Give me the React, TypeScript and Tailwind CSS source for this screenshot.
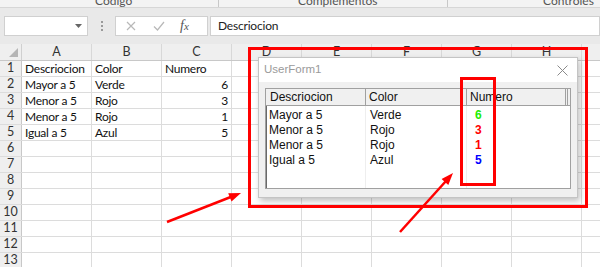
import React from "react";

const cols = ["A", "B", "C", "D", "E", "F", "G", "H", "I"];
const data: [string, string, string][] = [
  ["Descriocion", "Color", "Numero"],
  ["Mayor a 5", "Verde", "6"],
  ["Menor a 5", "Rojo", "3"],
  ["Menor a 5", "Rojo", "1"],
  ["Igual a 5", "Azul", "5"],
];
const listRows: [string, string, string, string][] = [
  ["Mayor a 5", "Verde", "6", "text-[#22ee00]"],
  ["Menor a 5", "Rojo", "3", "text-[#ff0000]"],
  ["Menor a 5", "Rojo", "1", "text-[#ff0000]"],
  ["Igual a 5", "Azul", "5", "text-[#0000ff]"],
];

const sheetFont = { fontFamily: "Lato, 'Liberation Sans', sans-serif" };
const formFont = { fontFamily: "'Liberation Sans', Arial, sans-serif" };

export default function App() {
  const rows = Array.from({ length: 13 }, (_, i) => i + 1);
  return (
    <div className="relative w-[600px] h-[267px] overflow-hidden bg-white" style={sheetFont}>
      {/* ribbon group labels */}
      <div className="relative h-[8px] bg-[#f3f3f3] border-b border-[#d6d6d6] overflow-hidden">
        <div className="absolute left-[95px] top-[-8px] text-[12px] text-[#555]">Código</div>
        <div className="absolute left-[218px] top-0 h-[7px] w-px bg-[#c8c8c8]" />
        <div className="absolute left-[298px] top-[-8px] text-[12px] text-[#555]">Complementos</div>
        <div className="absolute left-[447px] top-0 h-[7px] w-px bg-[#c8c8c8]" />
        <div className="absolute left-[543px] top-[-8px] text-[12px] text-[#555]">Controles</div>
      </div>
      {/* formula bar */}
      <div className="h-[36px] bg-[#e9e9e9] flex items-start pt-[8px]">
        <div className="ml-[4px] w-[84px] h-[20px] bg-white border border-[#d0d0d0] flex items-center justify-end pr-[5px]">
          <svg width="7" height="4" viewBox="0 0 7 4"><path d="M0 0h7L3.5 4z" fill="#666" /></svg>
        </div>
        <div className="w-[27px] h-[20px] flex flex-col items-center justify-center gap-[2px]">
          <div className="w-[2px] h-[2px] bg-[#9a9a9a]" />
          <div className="w-[2px] h-[2px] bg-[#9a9a9a]" />
          <div className="w-[2px] h-[2px] bg-[#9a9a9a]" />
        </div>
        <div className="w-[93px] h-[20px] bg-white border border-[#d0d0d0] flex items-center">
          <svg className="ml-[10px]" width="10" height="10" viewBox="0 0 10 10">
            <path d="M1 1L9 9M9 1L1 9" stroke="#b8b8b8" strokeWidth="1.2" />
          </svg>
          <svg className="ml-[17px]" width="12" height="10" viewBox="0 0 12 10">
            <path d="M1 5.5L4.5 9L11 1" stroke="#b8b8b8" strokeWidth="1.2" fill="none" />
          </svg>
          <span
            className="ml-[15px] text-[14px] italic text-[#555] leading-none"
            style={{ fontFamily: "'Liberation Serif', serif" }}
          >
            f<span className="text-[11px]">x</span>
          </span>
        </div>
        <div className="ml-[2px] flex-1 h-[20px] bg-white border border-[#d0d0d0] flex items-center pl-[7px] text-[12px] tracking-[-0.2px] text-[#222]">
          Descriocion
        </div>
      </div>
      {/* column headers */}
      <div className="flex h-[17px] bg-[#efefef] border-b border-[#c8c8c8]">
        <div className="w-[22px] shrink-0 border-r border-[#d0d0d0] relative">
          <svg className="absolute right-[3px] bottom-[3px]" width="9" height="9" viewBox="0 0 9 9">
            <path d="M9 0V9H0z" fill="#b5b5b5" />
          </svg>
        </div>
        {cols.map((c) => (
          <div key={c} className="w-[70px] shrink-0 border-r border-[#d8d8d8] flex items-center justify-center text-[12.5px] text-[#333]">
            {c}
          </div>
        ))}
      </div>
      {/* rows */}
      {rows.map((r) => {
        const d = data[r - 1];
        return (
          <div key={r} className="flex h-[16px] border-b border-[#dcdcdc]">
            <div className="w-[22px] shrink-0 bg-[#efefef] border-r border-[#c8c8c8] flex items-center justify-center text-[12.5px] text-[#333]">
              {r}
            </div>
            {cols.map((c, ci) => (
              <div
                key={c}
                className={`w-[70px] shrink-0 border-r border-[#dcdcdc] flex items-center text-[12px] tracking-[-0.25px] text-[#111] px-[3px] ${
                  d && ci === 2 && r > 1 ? "justify-end" : ""
                }`}
              >
                {d && ci < 3 ? d[ci] : ""}
              </div>
            ))}
          </div>
        );
      })}

      {/* UserForm window */}
      <div
        className="absolute left-[258px] top-[57px] w-[320px] h-[141px] bg-[#f0f0f0] border border-[#c4c4c4] shadow-[2px_3px_6px_rgba(0,0,0,0.25)] flex flex-col"
        style={formFont}
      >
        <div className="h-[24px] bg-white flex items-center justify-between pl-[5px] pr-[9px]">
          <span className="text-[11.5px] text-[#9a9a9a]">UserForm1</span>
          <svg width="11" height="11" viewBox="0 0 11 11">
            <path d="M0.5 0.5L10.5 10.5M10.5 0.5L0.5 10.5" stroke="#8a8a8a" strokeWidth="1" />
          </svg>
        </div>
        <div className="px-[6px] pt-[6px]">
          <div className="h-[101px] bg-white border border-[#a0a0a0] shadow-[inset_1px_1px_0_#696969] flex flex-col text-[12px] text-[#111]">
            <div className="flex h-[17px] bg-[#f0f0f0] border-b border-[#a0a0a0]">
              <div className="w-[100px] border-r border-[#a0a0a0] pl-[4px] flex items-center">Descriocion</div>
              <div className="w-[101px] border-r border-[#a0a0a0] pl-[3px] flex items-center">Color</div>
              <div className="w-[101px] border-r-[3px] border-double border-[#a0a0a0] pl-[3px] flex items-center">Numero</div>
            </div>
            <div className="flex-1 flex relative">
              <div className="w-[100px] border-r border-[#eeeeee]" />
              <div className="w-[101px] border-r border-[#eeeeee]" />
              <div className="absolute left-0 top-[1px] w-full flex flex-col">
                {listRows.map(([a, b, n, cls], i) => (
                  <div key={i} className="flex h-[15px] items-center">
                    <div className="w-[100px] pl-[3px]">{a}</div>
                    <div className="w-[101px] pl-[4px]">{b}</div>
                    <div className={`w-[101px] pl-[8px] font-bold text-[12px] ${cls}`}>{n}</div>
                  </div>
                ))}
              </div>
            </div>
          </div>
        </div>
      </div>

      {/* annotations */}
      <svg className="absolute left-0 top-0 pointer-events-none" width="600" height="267" viewBox="0 0 600 267">
        <rect x="249.5" y="48.5" width="337" height="158" fill="none" stroke="#ff0000" strokeWidth="3" />
        <rect x="461.5" y="78.5" width="33" height="106" fill="none" stroke="#ff0000" strokeWidth="3" />
        <line x1="167" y1="222" x2="232" y2="196.5" stroke="#ff0000" strokeWidth="2.5" />
        <polygon points="241,193 231.5,201.6 228.2,193.2" fill="#ff0000" />
        <line x1="400" y1="232" x2="446" y2="181" stroke="#ff0000" strokeWidth="2.5" />
        <polygon points="453,173 448.3,184.9 441.6,178.9" fill="#ff0000" />
      </svg>
    </div>
  );
}
